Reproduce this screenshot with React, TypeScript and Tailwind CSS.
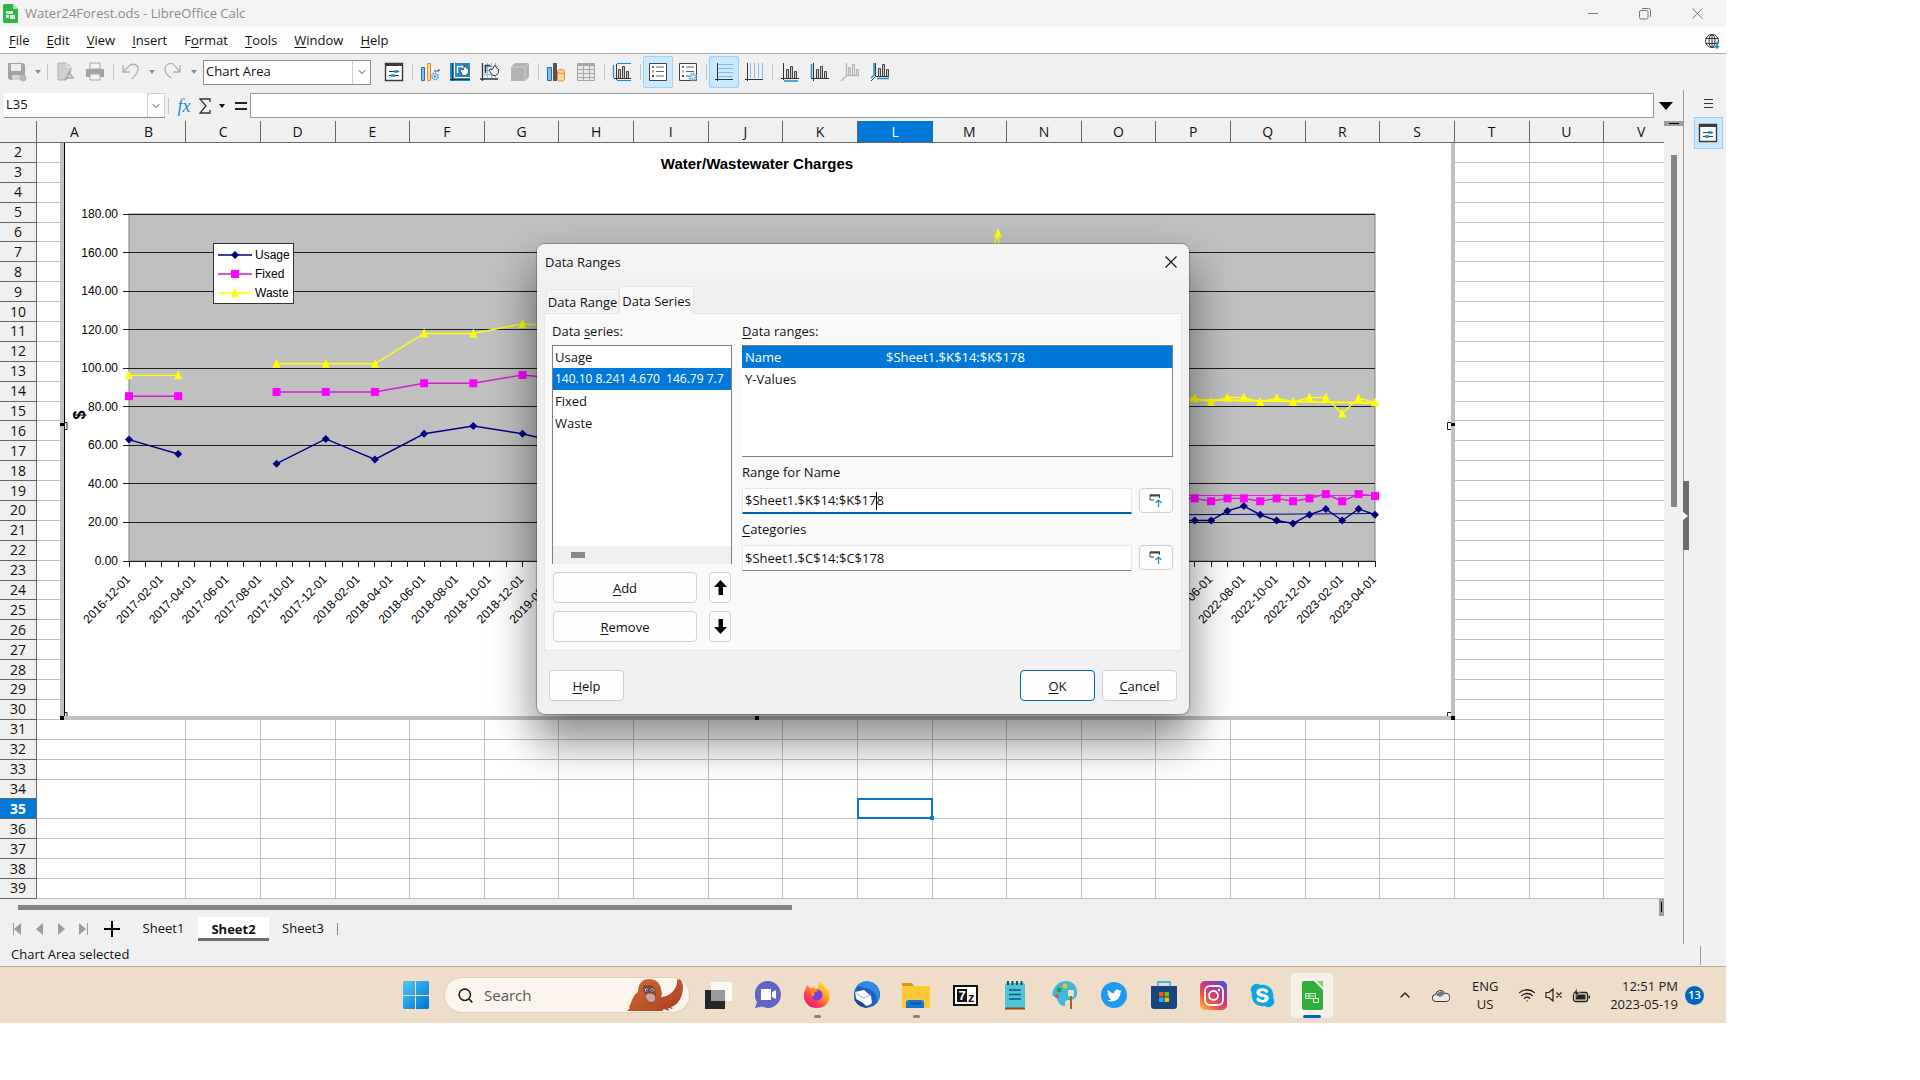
import { useState } from 'react';
import type { ReactNode } from 'react';
import { FaSkype, FaTwitter } from 'react-icons/fa';
import { ChevronDown, ChevronUp, Search, Wifi } from 'lucide-react';

const columns = 'ABCDEFGHIJKLMNOPQRSTUV'.split('');
const rows = Array.from({ length: 38 }, (_, i) => i + 2);
const menus = ['_File', '_Edit', '_View', '_Insert', 'F_ormat', '_Tools', '_Window', '_Help'];

// Chart geometry
const PLOT_LEFT = 69;
const PLOT_RIGHT = 1315;
const PLOT_TOP = 71;
const PLOT_BOTTOM = 418;
const MONTHS = 76;

type Point = [number, number];

const usage: Point[][] = [
  [[0, 63], [3, 55.5]],
  [[9, 50.5], [12, 63.3], [15, 52.7], [18, 66], [21, 70], [24, 66], [27, 60]],
  [[64, 21], [65, 21], [66, 21], [67, 26], [68, 28.5], [69, 24], [70, 21], [71, 19.5], [72, 24], [73, 27], [74, 21], [75, 27], [76, 24]],
];
const fixed: Point[][] = [
  [[0, 85.5], [3, 85.5]],
  [[9, 87.7], [12, 87.7], [15, 87.7], [18, 92.2], [21, 92.2], [24, 96.5], [27, 94]],
  [[64, 32], [65, 32.5], [66, 31], [67, 32.5], [68, 32.5], [69, 31], [70, 32.5], [71, 31], [72, 32.5], [73, 34.7], [74, 31], [75, 34.7], [76, 33.7]],
];
const waste: Point[][] = [
  [[0, 96.3], [3, 96.3]],
  [[9, 102.3], [12, 102.3], [15, 102.3], [18, 118], [21, 118], [24, 123], [27, 121.5]],
  [[51, 120], [53, 170], [53.5, 120]],
  [[64, 84.5], [65, 84.5], [66, 82.5], [67, 84.8], [68, 84.8], [69, 82.5], [70, 84.5], [71, 82.5], [72, 84.8], [73, 84.8], [74, 76.5], [75, 84.5], [76, 82.2]],
];

const px = (m: number) => PLOT_LEFT + (m * (PLOT_RIGHT - PLOT_LEFT)) / MONTHS;
const py = (v: number) => PLOT_BOTTOM - (v * (PLOT_BOTTOM - PLOT_TOP)) / 180;

function monthLabel(m: number) {
  const total = 2016 * 12 + 11 + m;
  return `${Math.floor(total / 12)}-${String((total % 12) + 1).padStart(2, '0')}-01`;
}

function Mnemonic({ text }: { text: string }) {
  const at = text.indexOf('_');
  if (at < 0) return <>{text}</>;
  return (
    <span>
      {text.slice(0, at)}
      <span className="underline underline-offset-2">{text[at + 1]}</span>
      {text.slice(at + 2)}
    </span>
  );
}

function Marker({ kind, x, y }: { kind: string; x: number; y: number }) {
  if (kind === 'diamond') return <path d={`M${x} ${y - 4}l4 4l-4 4l-4-4z`} fill="#000080" />;
  if (kind === 'square') return <rect x={x - 4} y={y - 4} width="8" height="8" fill="#ff00ff" />;
  return <path d={`M${x} ${y - 5}l4 9h-8z`} fill="#ffff00" />;
}

function Series({ data, kind, color }: { data: Point[][]; kind: string; color: string }) {
  return (
    <g>
      {data.map((run, i) => (
        <g key={i}>
          <polyline
            points={run.map(([m, v]) => `${px(m)},${py(v)}`).join(' ')}
            fill="none"
            stroke={color}
            strokeWidth="1.4"
          />
          {run.map(([m, v]) => (
            <Marker key={m} kind={kind} x={px(m)} y={py(v)} />
          ))}
        </g>
      ))}
    </g>
  );
}

function Chart() {
  const legend = [
    { name: 'Usage', kind: 'diamond', color: '#000080' },
    { name: 'Fixed', kind: 'square', color: '#c020c0' },
    { name: 'Waste', kind: 'triangle', color: '#ffff00' },
  ];
  return (
    <svg
      width="1395"
      height="577"
      viewBox="0 0 1395 577"
      className="block font-['Liberation_Sans',sans-serif]"
      role="img"
      aria-label="Water/Wastewater Charges"
    >
      <rect width="1395" height="577" fill="#c0c0c0" />
      <rect x="5" width="1386" height="573" fill="#fff" />
      <path d="M4.5 0V573" stroke="#000" />
      <text x="697" y="26" textAnchor="middle" fontSize="15" className="font-bold">
        Water/Wastewater Charges
      </text>
      <text transform="translate(25 272) rotate(-90)" textAnchor="middle" fontSize="16" className="font-bold">
        $
      </text>

      <rect x={PLOT_LEFT} y={PLOT_TOP} width={PLOT_RIGHT - PLOT_LEFT} height={PLOT_BOTTOM - PLOT_TOP} fill="#c0c0c0" stroke="#808080" />
      {Array.from({ length: 10 }, (_, i) => i * 20).map((v) => (
        <g key={v}>
          <path d={`M${PLOT_LEFT - 6} ${py(v)}H${PLOT_RIGHT}`} stroke="#1c1c1c" shapeRendering="crispEdges" />
          <text x="58" y={py(v) + 4} textAnchor="end" fontSize="12">
            {v.toFixed(2)}
          </text>
        </g>
      ))}
      {Array.from({ length: MONTHS + 1 }, (_, m) => (
        <path key={m} d={`M${px(m)} ${PLOT_BOTTOM}v6`} stroke="#1c1c1c" shapeRendering="crispEdges" />
      ))}
      {Array.from({ length: MONTHS / 2 + 1 }, (_, i) => i * 2).map((m) => (
        <text
          key={m}
          transform={`translate(${px(m) + 2} ${PLOT_BOTTOM + 19}) rotate(-46)`}
          textAnchor="end"
          fontSize="12"
        >
          {monthLabel(m)}
        </text>
      ))}

      <path d={`M${px(64)} ${py(24)}L${px(76)} ${py(24.6)}`} stroke="#000080" />
      <path d={`M${px(64)} ${py(34)}H${px(76)}`} stroke="#e020e0" />
      <path d={`M${px(64)} ${py(83.8)}L${px(76)} ${py(82)}`} stroke="#ffff00" strokeWidth="2" />
      <Series data={usage} kind="diamond" color="#000080" />
      <Series data={fixed} kind="square" color="#d020d0" />
      <Series data={waste} kind="triangle" color="#ffff00" />

      <rect x="153.5" y="100.5" width="80" height="60" fill="#fff" stroke="#333" />
      {legend.map((item, i) => (
        <g key={item.name}>
          <path d={`M158 ${112 + i * 19}h34`} stroke={item.color} strokeWidth="1.4" />
          <Marker kind={item.kind} x={175} y={112 + i * 19} />
          <text x="195" y={116 + i * 19} fontSize="12">
            {item.name}
          </text>
        </g>
      ))}

      {/* selection handles */}
      <path d="M0 280h4v3H0zM0 573h4v4H0zM1391 280h4v3h-4zM1391 573h4v4h-4zM695 573h4v4h-4z" fill="#000" />
      <path d="M5 279.500h2v7H5M5 569.500h2V573M1391 279.500h-3.500v7h3.500M1391 569.500h-3.500V573" fill="none" stroke="#222" />
    </svg>
  );
}

function Icon({ children }: { children: ReactNode }) {
  return (
    <svg width="20" height="20" viewBox="0 0 20 20" fill="none" aria-hidden="true">
      {children}
    </svg>
  );
}

const bars = 'M6.500 16V7.500h2V16M10.500 16V4.500h2V16M14.500 16V9.500h2V16';

const icons: Record<string, ReactNode> = {
  save: (
    <Icon>
      <path d="M1 1h15l2 2v15H3l-2-2z" fill="#a3a3a3" />
      <path d="M4 2h10v7H4z" fill="#ececec" />
      <path d="M5 13h8v5H5z" fill="#d5d5d5" />
      <circle cx="16" cy="16" r="3.500" fill="#b8b8b8" />
    </Icon>
  ),
  pdf: (
    <Icon>
      <path d="M3 1h9l4 4v4l-5 9H3z" fill="#cfcfcf" stroke="#b0b0b0" />
      <path d="M12 1v4h4" stroke="#f5f5f5" />
      <path d="M9 18c4-3 5-6 5-9c1 4 3 6 5 7c-4-1-7 0-10 2z" stroke="#a8a8a8" strokeWidth="1.500" />
    </Icon>
  ),
  print: (
    <Icon>
      <path d="M5 1h10v6H5z" fill="#f2f2f2" stroke="#a6a6a6" />
      <path d="M1 7h18v8H1z" fill="#a3a3a3" />
      <path d="M5 12h10v6H5z" fill="#f2f2f2" stroke="#a6a6a6" />
    </Icon>
  ),
  undo: (
    <Icon>
      <path d="M2 3v7h7M2.500 9.500L8 4c3-3 9-2 9 3c0 4-3 7-6 10" stroke="#b0b0b0" strokeWidth="1.300" />
    </Icon>
  ),
  redo: (
    <Icon>
      <path d="M17 3v7h-7M16.500 9.500L12 4C9-1 2 2 2 7c0 4 3 7 6 9" stroke="#b0b0b0" strokeWidth="1.300" />
    </Icon>
  ),
  props: (
    <Icon>
      <path d="M1.500 1.500h17v17h-17z" fill="#fff" stroke="#3a3a38" strokeWidth="1.400" />
      <path d="M1.500 2.500h17" stroke="#3a3a38" strokeWidth="3" />
      <path d="M5 9.500h10M5 13.500h10" stroke="#3a3a38" />
      <path d="M10 9.500h4M7 13.500h4" stroke="#1e8bcd" strokeWidth="2.400" />
    </Icon>
  ),
  chartType: (
    <Icon>
      <path d="M1.500 5.500h3v13h-3z" fill="#83beec" stroke="#1e6fae" />
      <path d="M7.500 1.500h3v17h-3z" fill="#f8db8f" stroke="#ed8733" />
      <path d="M14 9h5V7" stroke="#444" />
      <circle cx="15" cy="14.500" r="3" fill="#d8ecfb" stroke="#5aa4dc" strokeWidth="2" strokeDasharray="1.500 .8" />
      <circle cx="15" cy="14.500" r="1" fill="#1e6fae" />
    </Icon>
  ),
  chartArea: (
    <Icon>
      <path d="M0 1h20v18H0z" fill="#1e8bcd" />
      <path d="M4.500 1v14.500H20" stroke="#fff" />
      <path d="M2.500 1v18M0 17.500h20" stroke="#333" />
      <path d="M7.500 11V4.500h5l1 1.500" stroke="#fff" strokeWidth="1.500" />
      <path d="M10 8l2-1l1 1l2-5l1.500 3l2 1v4l-3 2.500h-3z" fill="#f4f4f4" stroke="#555" />
    </Icon>
  ),
  chartWall: (
    <Icon>
      <path d="M4 4.500h14M4 8.500h14M4 12.500h14M7.500 1v15M11.500 1v15M15.500 1v15" stroke="#83beec" />
      <path d="M2.500 1v18M0 17h18" stroke="#333" strokeWidth="1.300" />
      <path d="M5.500 11V3.500h5" stroke="#333" strokeWidth="1.500" />
      <path d="M9 8l2-1l1 1l3-5l1.500 3l2 1v4l-3 2.500h-3z" fill="#f4f4f4" stroke="#444" />
    </Icon>
  ),
  view3d: (
    <Icon>
      <path d="M1 5l4-4h14v14l-4 4H1z" fill="#b4b4b4" />
      <path d="M1 5h14v14M15 5l4-4" stroke="#cfcfcf" />
    </Icon>
  ),
  dataRanges: (
    <Icon>
      <path d="M1.500 5.500h4v13h-4z" fill="#83beec" stroke="#1e6fae" />
      <path d="M7 1h4v18H7z" fill="#555" />
      <path d="M11.500 9.500v8c0 2 7 2 7 0v-8z" fill="#f8db8f" stroke="#ed8733" />
      <ellipse cx="15" cy="9.500" rx="3.500" ry="2" fill="#f8db8f" stroke="#ed8733" />
    </Icon>
  ),
  dataTable: (
    <Icon>
      <path d="M1.500 1.500h17v17h-17z" fill="#e9e9e9" stroke="#a6a6a6" />
      <path d="M1.500 2.500h17" stroke="#a6a6a6" strokeWidth="3" />
      <path d="M1 7.500h18M1 11.500h18M1 15.500h18M7.500 1v18M13.500 1v18" stroke="#a6a6a6" />
    </Icon>
  ),
  titles: (
    <Icon>
      <path d="M5 1.500h14M1.500 3v13M5 18.500h14" stroke="#1e8bcd" strokeWidth="1.200" />
      <path d="M4.500 2v16M2 16.500h17" stroke="#333" />
      <path d={bars} fill="#c9c9c9" stroke="#444" />
    </Icon>
  ),
  legend: (
    <Icon>
      <path d="M1.500 1.500h17v17h-17z" fill="#fff" stroke="#444" />
      <path d="M8 5h8M8 9.500h8M8 14h8" stroke="#666" />
      <path d="M4 5h2" stroke="#1e8bcd" strokeWidth="2" />
      <path d="M4 9.500h2" stroke="#ed8733" strokeWidth="2" />
      <path d="M4 14h2" stroke="#444" strokeWidth="2" />
    </Icon>
  ),
  legendEdit: (
    <Icon>
      <path d="M1.500 1.500h17v17h-17z" fill="#fff" stroke="#444" />
      <path d="M8 5h8M8 9.500h8M8 14h3" stroke="#666" />
      <path d="M4 5h2" stroke="#1e8bcd" strokeWidth="2" />
      <path d="M4 9.500h2" stroke="#ed8733" strokeWidth="2" />
      <path d="M4 14h2" stroke="#444" strokeWidth="2" />
      <circle cx="15" cy="15" r="3" fill="#d8ecfb" stroke="#5aa4dc" strokeWidth="2.500" strokeDasharray="1.500 .8" />
    </Icon>
  ),
  hGrid: (
    <Icon>
      <path d="M4 2.500h15M4 6.500h15M4 10.500h15M4 14.500h15" stroke="#7bbcec" />
      <path d="M3.500 1v18M1 17.500h18" stroke="#333" />
    </Icon>
  ),
  vGrid: (
    <Icon>
      <path d="M6.500 1v15M10.500 1v15M14.500 1v15M18.500 1v15" stroke="#83beec" />
      <path d="M3.500 1v18M1 17.500h18" stroke="#333" />
    </Icon>
  ),
  xAxis: (
    <Icon>
      <path d="M4 19h14" stroke="#1e8bcd" strokeWidth="1.500" />
      <path d="M3.500 1v17M1 16.500h18" stroke="#333" />
      <path d={bars} fill="#c9c9c9" stroke="#444" />
    </Icon>
  ),
  yAxis: (
    <Icon>
      <path d="M1.500 2v14" stroke="#1e8bcd" strokeWidth="1.500" />
      <path d="M3.500 1v18M1 16.500h18" stroke="#333" />
      <path d={bars} fill="#c9c9c9" stroke="#444" />
    </Icon>
  ),
  zAxis: (
    <Icon>
      <path d="M6.500 1v12.500H19M6 14l-5 5" stroke="#b4b4b4" strokeWidth="1.300" />
      <path d="M8.500 13V5.500h2V13M12.500 13V2.500h2V13M16.500 13V7.500h2V13" fill="#ddd" stroke="#b4b4b4" />
    </Icon>
  ),
  allAxes: (
    <Icon>
      <path d="M4 1v11M7 16.500h12M1 16l4-4" stroke="#1e8bcd" strokeWidth="1.500" />
      <path d="M5.500 1v13.500H19M5.500 14.500L1 19" stroke="#333" />
      <path d="M8.500 14V6.500h2V14M12.500 14V2.500h2V14M16.500 14V7.500h2V14" fill="#c9c9c9" stroke="#444" />
    </Icon>
  ),
};

function ToolButton({ icon, label, active }: { icon: string; label: string; active?: boolean }) {
  return (
    <button
      aria-label={label}
      className={
        active
          ? 'flex h-8 w-[30px] items-center justify-center rounded-xs border border-[#99d1ff] bg-[#cce8ff]'
          : 'flex h-8 w-[30px] items-center justify-center'
      }
    >
      {icons[icon]}
    </button>
  );
}

function Caret({ dark }: { dark?: boolean }) {
  return (
    <button aria-label="More" className="flex w-3 justify-center">
      <svg width="6" height="4" viewBox="0 0 6 4">
        <path d="M0 0h6L3 4z" fill={dark ? '#000' : '#8f8f8f'} />
      </svg>
    </button>
  );
}

function Divider() {
  return (
    <div className="flex w-[6px] justify-center">
      <div className="h-4 w-px bg-[#c4c4c4]" />
    </div>
  );
}

function TitleBar() {
  return (
    <header className="flex h-[27px] items-center bg-[#f3f3f3] text-[13px] text-[#8c8c8c]">
      <svg width="15" height="19" viewBox="0 0 15 19" className="ml-[3px]" aria-hidden="true">
        <path d="M1.500 0H10l5 5v12.500a1.500 1.500 0 0 1-1.500 1.500h-12A1.500 1.500 0 0 1 0 17.500v-16A1.500 1.500 0 0 1 1.500 0z" fill="#2fb344" />
        <path d="M10 0l5 5h-5z" fill="#a4e3ad" />
        <path d="M3 7h7v3H3zM3 11h3v3H3zM7 11h5v4H7z" fill="#d8f5dc" />
      </svg>
      <h1 className="ml-[7px]">Water24Forest.ods - LibreOffice Calc</h1>
      <div className="ml-auto flex items-center">
        <button aria-label="Minimize" className="flex w-[52px] justify-center">
          <svg width="10" height="10" viewBox="0 0 10 10"><path d="M0 4.500h10" stroke="#777" /></svg>
        </button>
        <button aria-label="Restore" className="flex w-[52px] justify-center">
          <svg width="12" height="12" viewBox="0 0 12 12" fill="none" stroke="#777">
            <rect x=".5" y="2.500" width="8.500" height="8.500" rx="1.500" />
            <path d="M3 .5h6.500a2 2 0 0 1 2 2V9" />
          </svg>
        </button>
        <button aria-label="Close" className="mr-[3px] flex w-[52px] justify-center">
          <svg width="11" height="11" viewBox="0 0 11 11"><path d="M.5.5l10 10M10.500.5l-10 10" stroke="#777" /></svg>
        </button>
      </div>
    </header>
  );
}

function MenuBar() {
  return (
    <nav className="flex h-[27px] items-center border-b border-[#ababab] bg-[#fdfdfd] pt-[2px] pl-[9px] text-[13px]">
      <div className="flex gap-[17px]">
        {menus.map((m) => (
          <button key={m}>
            <Mnemonic text={m} />
          </button>
        ))}
      </div>
      <button aria-label="Check for updates" className="mr-[6px] ml-auto">
        <svg width="15" height="15" viewBox="0 0 15 15" fill="none" stroke="#333">
          <circle cx="7" cy="7" r="6.500" />
          <ellipse cx="7" cy="7" rx="3" ry="6.500" />
          <path d="M1 4.500h12M1 9.500h12M7 .5v13" />
          <path d="M12 8v6M10 12l2 2l2-2" stroke="#1e8bcd" strokeWidth="1.500" />
        </svg>
      </button>
    </nav>
  );
}

function Toolbar() {
  return (
    <div className="flex h-9 items-center pl-[2px]">
      <ToolButton icon="save" label="Save" />
      <Caret />
      <Divider />
      <ToolButton icon="pdf" label="Export as PDF" />
      <ToolButton icon="print" label="Print" />
      <Divider />
      <ToolButton icon="undo" label="Undo" />
      <Caret />
      <ToolButton icon="redo" label="Redo" />
      <Caret />
      <div className="relative ml-[3px] flex h-[25px] w-[168px] border border-[#8c8c8c] bg-white">
        <select aria-label="Select chart element" className="w-full appearance-none bg-white px-[2px] text-[13px]">
          <option>Chart Area</option>
        </select>
        <span className="pointer-events-none absolute inset-y-0 right-0 flex w-[18px] items-center justify-center border-l border-[#d0d0d0]">
          <ChevronDown size={12} strokeWidth={1.5} />
        </span>
      </div>
      <div className="ml-2 flex items-center">
        <ToolButton icon="props" label="Format selection" />
        <Divider />
        <ToolButton icon="chartType" label="Chart type" />
        <ToolButton icon="chartArea" label="Chart area" />
        <ToolButton icon="chartWall" label="Chart wall" />
        <ToolButton icon="view3d" label="3D view" />
        <Divider />
        <ToolButton icon="dataRanges" label="Data ranges" />
        <ToolButton icon="dataTable" label="Data table" />
        <Divider />
        <ToolButton icon="titles" label="Titles" />
        <Divider />
        <ToolButton icon="legend" label="Legend on/off" active />
        <ToolButton icon="legendEdit" label="Legend" />
        <Divider />
        <ToolButton icon="hGrid" label="Horizontal grids" active />
        <ToolButton icon="vGrid" label="Vertical grids" />
        <Divider />
        <ToolButton icon="xAxis" label="X axis" />
        <ToolButton icon="yAxis" label="Y axis" />
        <ToolButton icon="zAxis" label="Z axis" />
        <ToolButton icon="allAxes" label="All axes" />
      </div>
    </div>
  );
}

function FormulaBar() {
  return (
    <div className="flex h-[31px] shrink-0 items-center pl-1">
      <div className="flex h-[25px] w-[161px] border-b border-[#8c8c8c] bg-white">
        <input aria-label="Name box" defaultValue="L35" className="min-w-0 flex-1 px-[2px] text-[13px] outline-none" />
        <button aria-label="Names" className="flex w-[18px] items-center justify-center border border-b-0 border-[#d0d0d0]">
          <ChevronDown size={12} strokeWidth={1.5} />
        </button>
      </div>
      <Divider />
      <button aria-label="Function wizard" className="ml-[3px] w-[20px] font-['Liberation_Serif'] text-[18px] leading-5 text-[#1e8bcd] italic">
        fx
      </button>
      <button aria-label="Select function" className="flex w-[22px] justify-center">
        <svg width="12" height="16" viewBox="0 0 12 16" fill="none" stroke="#333" strokeWidth="1.300">
          <path d="M11 4V1H1l6 7l-6 7h10v-3" />
        </svg>
      </button>
      <Caret dark />
      <button aria-label="Formula" className="ml-1 flex w-[18px] justify-center">
        <svg width="12" height="8" viewBox="0 0 12 8"><path d="M0 1h12M0 7h12" stroke="#222" strokeWidth="2" /></svg>
      </button>
      <input aria-label="Formula input" className="h-[25px] min-w-0 flex-1 border border-[#9a9a9a] bg-white px-1 text-[13px] outline-none" />
      <button aria-label="Expand formula bar" className="flex w-[29px] pl-[5px]">
        <svg width="14" height="8" viewBox="0 0 14 8"><path d="M0 0h14L7 8z" /></svg>
      </button>
    </div>
  );
}

function Sheet() {
  return (
    <div className="flex min-h-0 flex-1">
      <div className="relative min-w-0 flex-1 overflow-hidden bg-white">
        <table className="h-full w-[calc(100%+15px)] table-fixed border-separate border-spacing-0 text-[14px] leading-4">
          <thead>
            <tr className="h-[22px] bg-[#f0f0f0]">
              <th className="w-[37px] border-r border-b border-[#666] p-0" />
              {columns.map((c) => (
                <th
                  key={c}
                  scope="col"
                  className={
                    c === 'L'
                      ? 'border-b border-[#666] bg-[#0078d7] p-0 font-normal text-white'
                      : c === 'A'
                        ? 'border-b border-[#666] p-0 font-normal'
                        : 'border-r border-b border-[#666] p-0 font-normal'
                  }
                >
                  {c}
                </th>
              ))}
            </tr>
          </thead>
          <tbody>
            {rows.map((r) => (
              <tr key={r}>
                <th
                  scope="row"
                  className={
                    r === 35
                      ? 'border-r border-b border-[#666] bg-[#0078d7] p-0 font-bold text-white'
                      : 'border-r border-b border-[#666] bg-[#f0f0f0] p-0 font-normal'
                  }
                >
                  {r}
                </th>
                {columns.map((c) => (
                  <td
                    key={c}
                    className={
                      c === 'L' && r === 35
                        ? 'relative border-r border-b border-[#c0c0c0] p-0'
                        : c === 'A'
                          ? r === 34 ? 'p-0' : 'border-b border-[#c0c0c0] p-0'
                          : r === 34
                            ? 'border-r border-[#c0c0c0] p-0'
                            : 'border-r border-b border-[#c0c0c0] p-0'
                    }
                  >
                    {c === 'L' && r === 35 && (
                      <div className="absolute -inset-px border-2 border-[#0078d7]">
                        <div className="absolute -right-[3px] -bottom-[3px] size-1 bg-[#0078d7]" />
                      </div>
                    )}
                  </td>
                ))}
              </tr>
            ))}
          </tbody>
        </table>
        {/* embedded chart object */}
        <div className="absolute top-[22px] left-[60px]">
          <Chart />
        </div>
      </div>
      <div className="w-[19px]">
        <div className="flex h-[5px] items-center justify-center bg-[#9c9c9c]">
          <div className="h-px w-[10px] bg-black" />
        </div>
        <div className="mt-[29px] ml-[7px] h-[352px] w-[6px] bg-[#858585]" />
      </div>
    </div>
  );
}

function SheetTabs() {
  return (
    <div className="flex h-[31px] shrink-0 items-center pl-3 text-[13px]">
      <div className="flex gap-[10px]">
        {['M8 0v12L1 6zM0 0h1v12H0z', 'M8 0v12L1 6z', 'M1 0v12l7-6z', 'M0 0v12l7-6zM8 0h1v12H8z'].map((d, i) => (
          <button key={i} aria-label={['First', 'Previous', 'Next', 'Last'][i]}>
            <svg width="12" height="14" viewBox="0 -1 10 14"><path d={d} fill="#9c9c9c" /></svg>
          </button>
        ))}
      </div>
      <button aria-label="Add sheet" className="ml-[14px]">
        <svg width="16" height="16" viewBox="0 0 16 16"><path d="M8 0v16M0 8h16" stroke="#000" strokeWidth="2" /></svg>
      </button>
      <button className="ml-[9px] h-[24px] w-[69px]">Sheet1</button>
      <button className="h-[24px] w-[71px] border-b-[3px] border-[#6e6e6e] bg-white pt-[3px] font-bold">Sheet2</button>
      <button className="h-[24px] w-[68px]">Sheet3</button>
      <div className="h-3 w-px bg-[#888]" />
    </div>
  );
}

function Workspace() {
  return (
    <div className="flex min-h-0 flex-1">
      <main className="flex min-w-0 flex-1 flex-col">
        <FormulaBar />
        <Sheet />
        <div className="flex h-[14px] shrink-0 items-center pt-[2px]">
          <div className="ml-[18px] h-[5px] w-[46%] bg-[#858585]" />
          <div className="mr-[19px] ml-auto flex h-[18px] w-[5px] items-center justify-center bg-[#9c9c9c]">
            <div className="h-[10px] w-px bg-black" />
          </div>
        </div>
        <SheetTabs />
      </main>
      <aside className="relative flex w-[43px] flex-col items-center border-l border-[#9a9a9a] pl-[6px]">
        <button aria-label="Sidebar settings" className="mt-[9px] flex h-[9px] w-[9px] flex-col justify-between">
          <span className="h-px w-full bg-[#333]" />
          <span className="h-px w-full bg-[#333]" />
          <span className="h-px w-full bg-[#333]" />
        </button>
        <button aria-label="Properties" className="mt-[9px] flex h-8 w-[29px] items-center justify-center border border-[#99d1ff] bg-[#cce8ff]">
          {icons.props}
        </button>
        <button aria-label="Hide sidebar" className="absolute top-[391px] -left-px flex h-[69px] w-[6px] items-center bg-[#6b6b6b]">
          <svg width="5" height="8" viewBox="0 0 5 8"><path d="M0 0l5 4l-5 4z" fill="#fff" /></svg>
        </button>
      </aside>
    </div>
  );
}

function PushButton({ text, className, onClick }: { text: string; className: string; onClick?: () => void }) {
  return (
    <button onClick={onClick} className={`h-[31px] rounded border bg-[#fdfdfd] ${className}`}>
      <Mnemonic text={text} />
    </button>
  );
}

function ShrinkButton() {
  return (
    <button aria-label="Select data range" className="flex h-[25px] w-[34px] items-center justify-center rounded border border-[#d0d0d0] bg-[#fdfdfd]">
      <svg width="14" height="16" viewBox="0 0 14 16" fill="none">
        <path d="M10.500 5V2H1v5h4" stroke="#444" />
        <path d="M1 2.500h10" stroke="#444" strokeWidth="2" />
        <path d="M9.500 14V7M6.500 10l3-3l3 3" stroke="#1e8bcd" strokeWidth="1.200" />
      </svg>
    </button>
  );
}

function DataRangesDialog({ onClose }: { onClose: () => void }) {
  const [selected, setSelected] = useState(1);
  const series = ['Usage', '140.10 8.241 4.670  146.79 7.7', 'Fixed', 'Waste'];
  return (
    <section
      role="dialog"
      aria-label="Data Ranges"
      className="absolute top-[244px] left-[537px] w-[652px] overflow-hidden rounded-lg bg-[#f0f0f0] text-[13px] leading-[18px] shadow-[0_0_1px_1px_rgba(0,0,0,0.25),0_24px_44px_4px_rgba(0,0,0,0.45)]"
    >
      <div className="flex h-[35px] items-center justify-between bg-[#f3f3f3] pr-3 pl-2">
        <h2>Data Ranges</h2>
        <button aria-label="Close" onClick={onClose}>
          <svg width="12" height="12" viewBox="0 0 12 12"><path d="M.5.5l11 11M11.500.5l-11 11" stroke="#111" strokeWidth="1.100" /></svg>
        </button>
      </div>

      <div className="px-[7px] pt-[7px]">
        <div role="tablist" className="flex items-end pl-[2px]">
          <button role="tab" className="h-6 w-[73px] border border-b-0 border-[#e5e5e5] bg-[#f3f3f3] whitespace-nowrap">Data Range</button>
          <button role="tab" aria-selected="true" className="relative -mb-px h-[28px] w-[75px] border border-b-0 border-[#e5e5e5] bg-[#f9f9f9] whitespace-nowrap">Data Series</button>
        </div>

        <div className="flex gap-[10px] border border-[#e5e5e5] bg-[#f9f9f9] px-[7px] pt-2 pb-2">
          <div className="w-[180px]">
            <p><Mnemonic text="Data _series:" /></p>
            <div className="mt-[5px] flex h-[219px] flex-col border border-b-0 border-[#808080] bg-white">
              <ul role="listbox" aria-label="Data series" className="flex-1 overflow-hidden">
                {series.map((s, i) => (
                  <li
                    key={s}
                    role="option"
                    aria-selected={selected === i}
                    onClick={() => setSelected(i)}
                    className={
                      selected === i
                        ? 'h-[22px] bg-[#0078d7] pl-[2px] text-xs leading-[22px] whitespace-pre text-white'
                        : 'h-[22px] pl-[2px] leading-[22px] whitespace-pre'
                    }
                  >
                    {s}
                  </li>
                ))}
              </ul>
              <div className="flex h-[18px] items-center bg-[#f0f0f0] pl-[18px]">
                <div className="h-[6px] w-[14px] bg-[#8a8a8a]" />
              </div>
            </div>
            <div className="mt-2 grid grid-cols-[144px_22px] justify-between gap-y-2 px-px">
              <PushButton text="_Add" className="border-[#d0d0d0]" />
              <button aria-label="Move up" className="flex items-center justify-center rounded border border-[#d0d0d0] bg-[#fdfdfd]">
                <svg width="13" height="15" viewBox="0 0 13 15"><path d="M6.500 0L13 7H9v8H4.500V7H0z" /></svg>
              </button>
              <PushButton text="_Remove" className="border-[#d0d0d0]" />
              <button aria-label="Move down" className="flex items-center justify-center rounded border border-[#d0d0d0] bg-[#fdfdfd]">
                <svg width="13" height="15" viewBox="0 0 13 15"><path d="M6.500 15L13 8H9V0H4.500v8H0z" /></svg>
              </button>
            </div>
          </div>

          <div className="min-w-0 flex-1 pr-px">
            <p><Mnemonic text="_Data ranges:" /></p>
            <table className="mt-[5px] w-full table-fixed border-t border-r border-[#808080] bg-white">
              <tbody>
                <tr className="h-[22px] bg-[#0078d7] text-white">
                  <td className="w-[144px] py-0 pl-[3px]">Name</td>
                  <td className="p-0">$Sheet1.$K$14:$K$178</td>
                </tr>
                <tr className="h-[22px]">
                  <td className="py-0 pl-[3px]">Y-Values</td>
                  <td />
                </tr>
              </tbody>
            </table>
            <div className="h-[67px] border-r border-b border-[#808080] bg-white" />

            <label htmlFor="range" className="mt-[6px] block"><Mnemonic text="Ran_ge for Name" /></label>
            <div className="mt-[7px] flex items-center justify-between">
              <div className="relative">
                <input id="range" defaultValue="$Sheet1.$K$14:$K$178" className="block h-[26px] w-[390px] border border-b-2 border-[#e8e8e8] border-b-[#005fb8] bg-white px-[2px] outline-none" />
                <span className="absolute top-1 left-[134px] h-[18px] w-px bg-black" />
              </div>
              <ShrinkButton />
            </div>

            <label htmlFor="categories" className="mt-[6px] block"><Mnemonic text="_Categories" /></label>
            <div className="mt-[7px] flex items-center justify-between">
              <input id="categories" defaultValue="$Sheet1.$C$14:$C$178" className="block h-[26px] w-[390px] border border-[#e8e8e8] border-b-[#868686] bg-white px-[2px] outline-none" />
              <ShrinkButton />
            </div>
          </div>
        </div>
      </div>

      <div className="flex px-3 pt-[19px] pb-[13px]">
        <PushButton text="_Help" className="w-[75px] border-[#d0d0d0]" />
        <PushButton text="_OK" onClick={onClose} className="mr-[7px] ml-auto w-[75px] border-[#0067c0]" />
        <PushButton text="_Cancel" onClick={onClose} className="w-[75px] border-[#d0d0d0]" />
      </div>
    </section>
  );
}

function AppIcon({ label, children, state }: { label: string; children: ReactNode; state?: 'open' | 'active' }) {
  return (
    <button
      aria-label={label}
      className={
        state === 'active'
          ? 'relative -mx-px flex h-[45px] w-[42px] items-center justify-center rounded bg-[#f7f0e6]'
          : 'relative flex h-[45px] w-10 items-center justify-center'
      }
    >
      {children}
      {state === 'open' && <span className="absolute bottom-0 h-[3px] w-[7px] rounded-full bg-[#8a8278]" />}
      {state === 'active' && <span className="absolute bottom-0 h-[3px] w-[18px] rounded-full bg-[#0067c0]" />}
    </button>
  );
}

function Orangutan() {
  return (
    <svg width="58" height="34" viewBox="0 0 58 34" aria-hidden="true">
      <defs>
        <linearGradient id="fur" x1="0" y1="0" x2="1" y2="1">
          <stop offset="0" stopColor="#d9683a" />
          <stop offset="1" stopColor="#a8401c" />
        </linearGradient>
      </defs>
      <path d="M1 33l3-3l-1-1C6 24 6 18 12 14C12 5 17 1 23 1C30 1 34 5 35 11l1 5l-1 3C40 19 45 16 48 12C51 8 51 5 51 2C54 0 56 3 57 8C57 19 52 27 45 29l2 2l-5-1l1 3l-5-2l-2 2z" fill="url(#fur)" />
      <path d="M17 9c1-3 4-2 5-1c2-2 5-1 6 2c1 3 2 5 2 9c0 5-3 7-6 6c-3-1-4-4-4-7c-2-3-4-6-3-9z" fill="#7a4a3c" />
      <path d="M20 17c2-2 7-2 9 1c1 4-1 7-4 6c-3 0-5-3-5-7z" fill="#cfa5a0" />
      <circle cx="20.500" cy="12" r="1.600" fill="#fff" />
      <circle cx="26" cy="12" r="1.600" fill="#fff" />
      <circle cx="20.800" cy="12.300" r="1" fill="#222" />
      <circle cx="25.800" cy="12.300" r="1" fill="#222" />
    </svg>
  );
}

function Taskbar() {
  return (
    <footer className="flex h-[57px] shrink-0 items-center border-t border-[#b9a995] bg-[#eeddc9] pl-[396px] text-[#1b1b1b]">
      <div className="flex shrink-0 items-center gap-2">
        <AppIcon label="Start">
          <svg width="26" height="28" viewBox="0 0 26 28">
            <defs>
              <linearGradient id="win" x1="0" y1="0" x2="1" y2="1">
                <stop offset="0" stopColor="#4cc8f5" />
                <stop offset="1" stopColor="#0072d0" />
              </linearGradient>
            </defs>
            <path d="M1 0h11v14H0V1zM13 0h12l1 1v13H13zM0 15h12v13H1l-1-1zM13 15h13v12l-1 1H13z" fill="url(#win)" />
          </svg>
        </AppIcon>
        <label className="flex h-9 w-[246px] items-center rounded-full border border-[#e0d0bc] bg-[#fbf5ee] pr-[5px] pl-3">
          <Search size={17} strokeWidth={2.2} />
          <input type="search" placeholder="Search" aria-label="Search" className="ml-[10px] min-w-0 flex-1 bg-transparent text-[15px] outline-none placeholder:text-[#555]" />
          <Orangutan />
        </label>
        <div className="flex w-[634px] justify-between">
          <AppIcon label="Task view">
            <svg width="27" height="27" viewBox="0 0 27 27">
              <path d="M0 8h20v19H0z" fill="#262626" />
              <path d="M6 0h21v19H6z" fill="#fff" opacity=".75" />
              <path d="M6 8h14v11H6z" fill="#999" />
            </svg>
          </AppIcon>
          <AppIcon label="Chat">
            <svg width="26" height="28" viewBox="0 0 26 28">
              <path d="M13 0a13 13.500 0 1 1-6 25.500L0 27l2-6A13 13.500 0 0 1 13 0z" fill="#6264c4" />
              <path d="M6 8h10v11H6zM17 11l4-2v9l-4-2z" fill="#fff" />
            </svg>
          </AppIcon>
          <AppIcon label="Firefox" state="open">
            <svg width="26" height="28" viewBox="0 0 26 28">
              <defs>
                <linearGradient id="fox" x1="1" y1="0" x2=".2" y2="1">
                  <stop offset=".1" stopColor="#fff04a" />
                  <stop offset=".45" stopColor="#ff9a1f" />
                  <stop offset=".75" stopColor="#ff3b4f" />
                  <stop offset="1" stopColor="#e0167c" />
                </linearGradient>
              </defs>
              <path d="M3 4l3 3h3l2-2v3l3-1c0-3 1-5 3-7c1 3 4 5 6 8l1-1c4 9 1 20-11 20C3 27-1 19 0 12c1-3 2-5 3-8z" fill="url(#fox)" />
              <circle cx="13" cy="14" r="5.500" fill="#7a3ee0" />
              <path d="M6 8c3-1 6 0 8 2c-2 1-3 1-4 2c1 2 0 3-2 4z" fill="#ff8a1e" />
            </svg>
          </AppIcon>
          <AppIcon label="Thunderbird">
            <svg width="27" height="28" viewBox="0 0 27 28">
              <circle cx="14" cy="13.500" r="13" fill="#1f5fc0" />
              <path d="M4 5C8-1 18-1 23 4c4 4 5 12 1 18c0-9-3-14-12-15z" fill="#2e8be0" />
              <path d="M2 11l9-2l7 6l1 7c-4 4-11 4-15-1z" fill="#fff" />
              <path d="M2 11l8 6l8-3" fill="none" stroke="#8fb5df" />
              <path d="M1 17c1 6 7 10 14 10l-5-5z" fill="#1748a0" />
            </svg>
          </AppIcon>
          <AppIcon label="File Explorer" state="open">
            <svg width="28" height="26" viewBox="0 0 28 26">
              <path d="M0 1h10l2 3h-12z" fill="#d99a12" />
              <path d="M0 4h28v22H0z" fill="#fcc934" />
              <path d="M4 26v-5q0-3 3-3h12q3 0 3 3v5z" fill="#1677d2" />
              <path d="M8 21.500h11" stroke="#0c4f96" strokeWidth="1.500" />
            </svg>
          </AppIcon>
          <AppIcon label="7-Zip">
            <svg width="25" height="21" viewBox="0 0 25 21">
              <path d="M1 1h23v19H1z" fill="#fff" stroke="#111" strokeWidth="2" />
              <path d="M4 4h10v13H4z" fill="#111" />
              <text x="5.500" y="15" fontSize="13" fill="#fff" className="font-['Liberation_Sans'] font-bold">7</text>
              <text x="15" y="17" fontSize="13" fill="#111" className="font-['Liberation_Sans'] font-bold">z</text>
            </svg>
          </AppIcon>
          <AppIcon label="Notepad">
            <svg width="20" height="29" viewBox="0 0 20 29">
              <rect y="2" width="20" height="25" rx="2" fill="#4dc4dc" />
              <path d="M4 9h12M4 13.500h12M4 18h12" stroke="#16586b" strokeWidth="1.500" />
              <path d="M3 0v4M7.500 0v4M12 0v4M16.500 0v4" stroke="#175063" strokeWidth="2" />
              <path d="M0 27.500h20" stroke="#8a4b16" strokeWidth="2" />
            </svg>
          </AppIcon>
          <AppIcon label="Paint">
            <svg width="26" height="28" viewBox="0 0 26 28">
              <path d="M14 0c7 0 11 5 11 11c0 8-5 8-8 8c-5 0-4 3-4 6c-4 0-5-2-6-3c-2-2-1-4-4-6c-3-1-3-3-2-6C3 4 8 0 14 0z" fill="#3bb9dd" />
              <circle cx="7" cy="9" r="2.500" fill="#2f9e44" />
              <circle cx="13" cy="5" r="2.500" fill="#f0c419" />
              <circle cx="5" cy="15" r="2" fill="#e5533d" />
              <path d="M16 9h6v5l-1 2h-4l-1-2z" fill="#f0dcc0" />
              <path d="M19 15v13" stroke="#a8621c" strokeWidth="2" />
            </svg>
          </AppIcon>
          <AppIcon label="Twitter">
            <span className="flex size-[26px] items-center justify-center rounded-full bg-[#1d9bf0] text-white">
              <FaTwitter size={15} />
            </span>
          </AppIcon>
          <AppIcon label="Microsoft Store">
            <svg width="26" height="28" viewBox="0 0 26 28">
              <path d="M7 7V1h12v6" fill="none" stroke="#42b6e8" strokeWidth="1.800" />
              <path d="M0 5h26v20q0 3-3 3H3q-3 0-3-3z" fill="#17457e" />
              <path d="M8 11h4.500v4.500H8z" fill="#f25022" />
              <path d="M13.500 11H18v4.500h-4.500z" fill="#7fba00" />
              <path d="M8 16.500h4.500V21H8z" fill="#29a9f0" />
              <path d="M13.500 16.500H18V21h-4.500z" fill="#ffb900" />
            </svg>
          </AppIcon>
          <AppIcon label="Instagram">
            <svg width="27" height="29" viewBox="0 0 27 29" fill="none">
              <defs>
                <linearGradient id="insta" x1="0" y1="1" x2=".8" y2="0">
                  <stop offset="0" stopColor="#fdc850" />
                  <stop offset=".35" stopColor="#f2543c" />
                  <stop offset=".65" stopColor="#c8318f" />
                  <stop offset="1" stopColor="#5b4fd0" />
                </linearGradient>
              </defs>
              <rect width="27" height="29" rx="5" fill="url(#insta)" />
              <rect x="5" y="5" width="18" height="19" rx="5" stroke="#fff" strokeWidth="1.800" />
              <circle cx="13.500" cy="14.500" r="4.500" stroke="#fff" strokeWidth="1.800" />
              <circle cx="19" cy="9" r="1.200" fill="#fff" />
            </svg>
          </AppIcon>
          <AppIcon label="Skype">
            <FaSkype size={27} color="#0ea5e0" className="rounded-xl bg-[radial-gradient(circle,white_45%,transparent_46%)]" />
          </AppIcon>
          <AppIcon label="LibreOffice Calc" state="active">
            <svg width="21" height="29" viewBox="0 0 21 29">
              <path d="M2 0h11l8 8v19q0 2-2 2H2q-2 0-2-2V2q0-2 2-2z" fill="#2fae3c" />
              <path d="M15 0h6v6z" fill="#7ed957" />
              <path d="M12 0h2l7 7v2z" fill="#fff" />
              <path d="M3.500 12.500h10v5h-10zM7 12v6M3 15h11M11.500 17.500h5v4h-5z" fill="none" stroke="#d8f5dc" />
            </svg>
          </AppIcon>
        </div>
      </div>

      <div className="ml-auto flex items-center pr-[22px] text-[13px] leading-[18px]">
        <button aria-label="Show hidden icons"><ChevronUp size={16} strokeWidth={2} /></button>
        <svg width="18" height="13" viewBox="0 0 18 13" className="ml-[19px]" aria-label="OneDrive">
          <path d="M4 12.500a3.500 3.500 0 0 1-.5-7a5 5 0 0 1 9.500-1a4 4 0 0 1 1.500 8z" fill="#e8e8e8" stroke="#333" />
          <path d="M4 6a5 5 0 0 1 9-1l-5 3z" fill="#777" />
        </svg>
        <button className="ml-5 w-[30px] text-center">ENG<br />US</button>
        <Wifi size={18} strokeWidth={1.7} className="ml-[18px]" />
        <svg width="18" height="14" viewBox="0 0 18 14" fill="none" stroke="#222" strokeWidth="1.200" className="ml-[9px]" aria-label="Muted">
          <path d="M1 4.500v5h3l4 3.500V1L4 4.500zM11.500 4.500l5 5M16.500 4.500l-5 5" />
        </svg>
        <svg width="18" height="15" viewBox="0 0 18 15" className="ml-[9px]" aria-label="Battery">
          <rect x="1.500" y="4.500" width="14" height="9" rx="2" fill="none" stroke="#222" strokeWidth="1.300" />
          <path d="M3.500 6.500h10v5h-10zM16.500 7.500h1.500v3h-1.500z" fill="#222" />
          <path d="M5 0L1 6h3l-1 4l5-6H5z" fill="#222" stroke="#eeddc9" strokeWidth=".6" />
        </svg>
        <button className="ml-5 text-right whitespace-nowrap">12:51 PM<br />2023-05-19</button>
        <span className="ml-[7px] flex size-[19px] items-center justify-center rounded-full bg-[#0067c0] text-[11px] font-semibold text-white">13</span>
      </div>
    </footer>
  );
}

export default function App() {
  const [open, setOpen] = useState(true);

  return (
    <div className="h-screen bg-white pr-[194px] pb-[57px] font-['Open_Sans','Noto_Sans',sans-serif] text-[#111]">
      <div className="relative flex h-full flex-col bg-[#f0f0f0]">
        <TitleBar />
        <MenuBar />
        <Toolbar />
        <Workspace />
        <div className="flex h-[22px] shrink-0 items-center justify-between pl-[11px] text-[13px]">
          <span>Chart Area selected</span>
          <div className="mr-[25px] h-[19px] w-px bg-[#9a9a9a]" />
        </div>
        <Taskbar />
        {open && <DataRangesDialog onClose={() => setOpen(false)} />}
      </div>
    </div>
  );
}
